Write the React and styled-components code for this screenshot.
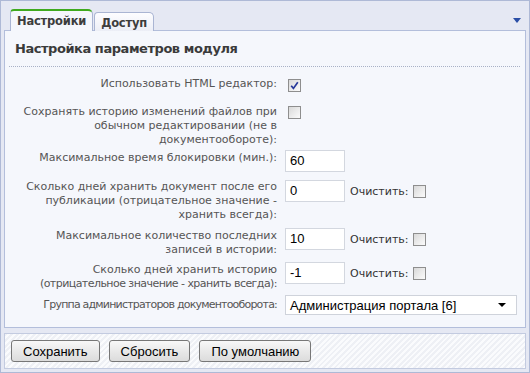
import React from "react";
import styled, { createGlobalStyle } from "styled-components";

const GlobalStyle = createGlobalStyle`
  html, body {
    margin: 0;
    padding: 0;
    background: #ffffff;
  }
  * {
    box-sizing: border-box;
  }
`;

const LABEL_FONT = `"DejaVu Sans", "Liberation Sans", sans-serif`;
const FIELD_FONT = `"Liberation Sans", Arial, sans-serif`;

const Frame = styled.div`
  width: 530px;
  height: 373px;
  border: 1px solid #aeb9d6;
  background: #e5e8f3;
  padding: 8px 3px 3px;
  display: flex;
  flex-direction: column;
`;

const TabBar = styled.div`
  display: flex;
  align-items: flex-end;
  height: 22px;
  margin-bottom: -1px;
  padding-left: 6px;
  position: relative;
  z-index: 1;
`;

const Tab = styled.div`
  height: ${({ $active }) => ($active ? "22px" : "19px")};
  padding: 0 6px;
  margin-right: 1px;
  display: flex;
  align-items: center;
  font-family: ${LABEL_FONT};
  font-weight: bold;
  font-size: 11.5px;
  letter-spacing: -0.2px;
  color: #3d3d3d;
  border: 1px solid #aab5d3;
  border-bottom: none;
  border-top: ${({ $active }) =>
    $active ? "2px solid #3faa1e" : "1px solid #aab5d3"};
  border-radius: 4px 5px 0 0;
  background: ${({ $active }) =>
    $active ? "#f5f7fc" : "linear-gradient(#fdfdff, #eceef6)"};
  padding-top: ${({ $active }) => ($active ? "0" : "1px")};
`;

const MenuArrow = styled.span`
  margin-left: auto;
  margin-right: 5px;
  align-self: flex-start;
  margin-top: 9px;
  width: 0;
  height: 0;
  border-left: 4px solid transparent;
  border-right: 4px solid transparent;
  border-top: 5px solid #2a4ea6;
`;

const Panel = styled.div`
  flex: 1;
  border: 1px solid #b3bedb;
  background: #f5f7fc;
  display: flex;
  flex-direction: column;
`;

const Heading = styled.div`
  margin: 9px 5px 0 4px;
  padding: 0 0 8px 6px;
  border-bottom: 1px dotted #a9b1c6;
  font-family: ${LABEL_FONT};
  font-weight: bold;
  font-size: 13px;
  letter-spacing: -0.45px;
  line-height: 18px;
  color: #3a3a3a;
`;

const Form = styled.div`
  padding-top: 10px;
  display: flex;
  flex-direction: column;
`;

const Row = styled.div`
  display: grid;
  grid-template-columns: 272px 1fr;
  column-gap: 8px;
  align-items: start;
  margin-top: ${({ $top }) => $top}px;
`;

const Label = styled.div`
  text-align: right;
  font-family: ${LABEL_FONT};
  font-size: 11px;
  line-height: 14px;
  color: #555555;
  padding-top: ${({ $pt }) => $pt || 0}px;
`;

const Squeeze = styled.span`
  letter-spacing: ${({ $ls }) => $ls}px;
`;

const Control = styled.div`
  display: flex;
  align-items: center;
`;

const Box = styled.span`
  width: 13px;
  height: 13px;
  border: 1px solid #8e8e8e;
  background: linear-gradient(135deg, #d9d9d9, #fbfbfb);
  display: inline-flex;
  align-items: center;
  justify-content: center;
  margin-top: ${({ $mt }) => $mt || 0}px;
  margin-left: ${({ $ml }) => $ml || 0}px;
`;

const TextField = styled.div`
  width: 60px;
  height: 22px;
  border: 1px solid #d3d7df;
  background: #ffffff;
  padding-left: 4px;
  font-family: ${FIELD_FONT};
  font-size: 13px;
  line-height: 20px;
  color: #000;
`;

const ClearLabel = styled.span`
  margin-left: 5px;
  margin-right: 4px;
  font-family: ${LABEL_FONT};
  font-size: 11px;
  color: #333333;
`;

const Select = styled.div`
  width: 232px;
  height: 20px;
  border: 1px solid #cfd3db;
  background: #ffffff;
  display: flex;
  align-items: center;
  padding: 0 10px 0 4px;
  font-family: ${FIELD_FONT};
  font-size: 13px;
  color: #000;
`;

const SelectArrow = styled.span`
  margin-left: auto;
  width: 0;
  height: 0;
  border-left: 4px solid transparent;
  border-right: 4px solid transparent;
  border-top: 4px solid #000;
`;

const Footer = styled.div`
  margin-top: 5px;
  height: 36px;
  border: 1px solid #c3cbe0;
  background: repeating-linear-gradient(
    135deg,
    #eef0f5 0px,
    #eef0f5 2px,
    #fafbfd 2px,
    #fafbfd 4px
  );
  display: flex;
  align-items: flex-start;
  gap: 9px;
  padding: 6px 0 0 6px;
`;

const Button = styled.button`
  height: 22px;
  padding: 0 11px;
  border: 1px solid #777777;
  border-radius: 3px;
  background: linear-gradient(#f8f8f8, #e9e9e9 50%, #dcdcdc);
  font-family: ${FIELD_FONT};
  font-size: 13px;
  color: #000;
  cursor: pointer;
`;

function Checkbox({ checked, mt, ml }) {
  return (
    <Box $mt={mt} $ml={ml}>
      {checked && (
        <svg width="9" height="9" viewBox="0 0 9 9">
          <path
            d="M1.2 4.8 L3.4 7.4 L7.8 1.2"
            fill="none"
            stroke="#27399a"
            strokeWidth="1.7"
          />
        </svg>
      )}
    </Box>
  );
}

function ClearField({ value }) {
  return (
    <Control>
      <TextField>{value}</TextField>
      <ClearLabel>Очистить:</ClearLabel>
      <Checkbox />
    </Control>
  );
}

export default function App() {
  return (
    <>
      <GlobalStyle />
      <Frame>
        <TabBar>
          <Tab $active>Настройки</Tab>
          <Tab>Доступ</Tab>
          <MenuArrow />
        </TabBar>
        <Panel>
          <Heading>Настройка параметров модуля</Heading>
          <Form>
            <Row $top={0}>
              <Label>Использовать HTML редактор:</Label>
              <Control>
                <Checkbox checked mt={2} ml={3} />
              </Control>
            </Row>
            <Row $top={13}>
              <Label>
                Сохранять историю изменений файлов при
                <br />
                обычном редактировании (не в
                <br />
                документообороте):
              </Label>
              <Control>
                <Checkbox mt={1} ml={3} />
              </Control>
            </Row>
            <Row $top={3}>
              <Label $pt={1}>Максимальное время блокировки (мин.):</Label>
              <Control>
                <TextField>60</TextField>
              </Control>
            </Row>
            <Row $top={8}>
              <Label>
                Сколько дней хранить документ после его
                <br />
                публикации (отрицательное значение -
                <br />
                хранить всегда):
              </Label>
              <ClearField value="0" />
            </Row>
            <Row $top={6}>
              <Label $pt={1}>
                Максимальное количество последних
                <br />
                записей в истории:
              </Label>
              <ClearField value="10" />
            </Row>
            <Row $top={5}>
              <Label $pt={1}>
                Сколько дней хранить историю
                <br />
                <Squeeze $ls={-0.55}>
                  (отрицательное значение - хранить всегда):
                </Squeeze>
              </Label>
              <ClearField value="-1" />
            </Row>
            <Row $top={4}>
              <Label $pt={3}>
                <Squeeze $ls={-0.8}>
                  Группа администраторов документооборота:
                </Squeeze>
              </Label>
              <Control>
                <Select>
                  Администрация портала [6]
                  <SelectArrow />
                </Select>
              </Control>
            </Row>
          </Form>
        </Panel>
        <Footer>
          <Button>Сохранить</Button>
          <Button>Сбросить</Button>
          <Button>По умолчанию</Button>
        </Footer>
      </Frame>
    </>
  );
}
